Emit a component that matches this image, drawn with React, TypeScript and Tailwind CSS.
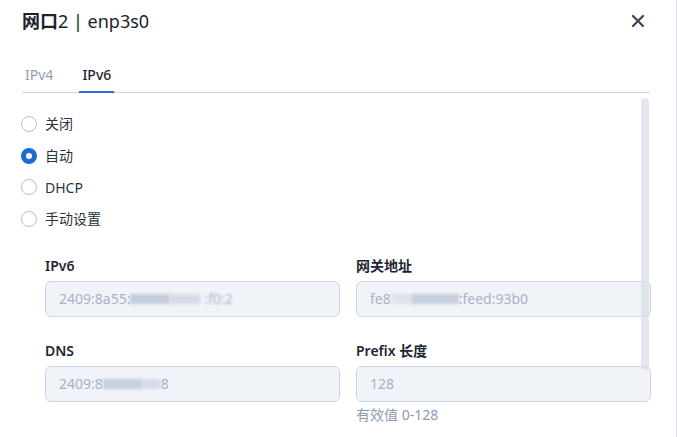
import React from "react";

const font = { fontFamily: '"Noto Sans", "Noto Sans CJK SC", sans-serif' };

function Radio({ label, checked }: { label: string; checked?: boolean }) {
  return (
    <div className="flex items-center h-[31.7px]">
      {checked ? (
        <span className="w-[16px] h-[16px] rounded-full border-[5px] border-[#1d6bd0] bg-white box-border" />
      ) : (
        <span className="w-[16px] h-[16px] rounded-full border border-[#b3c1d2] bg-white box-border" />
      )}
      <span className="ml-[8px] text-[14px] text-[#2b3340]">{label}</span>
    </div>
  );
}

function Field({ label, children, hint }: { label: string; children: React.ReactNode; hint?: string }) {
  return (
    <div className="flex flex-col">
      <div className="text-[14px] font-semibold text-[#1f2633] h-[16px] leading-[16px] mb-[7px] whitespace-nowrap">{label}</div>
      <div className="h-[36px] rounded-[6px] border border-[#cdd7e3] bg-[#f0f3f8] flex items-center px-[13px] text-[14px] text-[#a6b3c6] overflow-hidden whitespace-nowrap">
        {children}
      </div>
      {hint && <div className="text-[14px] text-[#8a9cb4] mt-[3px] leading-[20px]">{hint}</div>}
    </div>
  );
}

function Blur({ w, c = "#c3ccd9" }: { w: number; c?: string }) {
  return <span className="inline-block h-[10px] blur-[1.5px]" style={{ width: w, background: c }} />;
}

export default function App() {
  return (
    <div className="w-[677px] h-[437px] bg-white relative overflow-hidden border-r border-[#d9dde3]" style={font}>
      <div className="flex items-center justify-between pl-[22px] pr-[31px] pt-[6px] h-[36px]">
        <div className="text-[18px] text-[#1c222b]">
          <span className="font-bold">网口</span>2 | enp3s0
        </div>
        <svg width="14" height="14" viewBox="0 0 14 14">
          <path d="M2 2 L12 12 M12 2 L2 12" stroke="#3b4455" strokeWidth="2.2" strokeLinecap="round" />
        </svg>
      </div>
      <div className="ml-[22px] mr-[26px] mt-[24px] flex border-b border-[#c9d6e4] h-[33px]">
        <div className="px-[3px] text-[14px] text-[#8fa0b6] h-[33px] flex items-start pt-[4px]">IPv4</div>
        <div className="ml-[23px] w-[35px] text-[14px] font-medium text-[#1f2633] border-b-2 border-[#2a6fd6] -mb-[1px] flex justify-center items-start pt-[4px]">IPv6</div>
      </div>
      <div className="pl-[21px] pt-[15px] flex flex-col">
        <Radio label="关闭" />
        <Radio label="自动" checked />
        <Radio label="DHCP" />
        <Radio label="手动设置" />
      </div>
      <div className="pl-[45px] mt-[23px] grid grid-cols-[295px_295px] gap-x-[16px] gap-y-[26px]">
        <Field label="IPv6">
          <span>2409:8a55:</span>
          <Blur w={40} />
          <Blur w={30} c="#d4dbe6" />
          <span className="ml-[4px] blur-[1px]">:f0:2</span>
        </Field>
        <Field label="网关地址">
          <span>fe8</span>
          <Blur w={20} c="#dde3ec" />
          <Blur w={48} c="#c6cfdc" />
          <span>:feed:93b0</span>
        </Field>
        <Field label="DNS">
          <span>2409:8</span>
          <Blur w={40} c="#c6cfdc" />
          <Blur w={18} c="#d4dbe6" />
          <span>8</span>
        </Field>
        <Field label="Prefix 长度" hint="有效值 0-128">
          <span>128</span>
        </Field>
      </div>
      <div className="absolute left-[641px] top-[98px] w-[8px] h-[272px] rounded-full bg-[#d8dde5]/70" />
    </div>
  );
}
